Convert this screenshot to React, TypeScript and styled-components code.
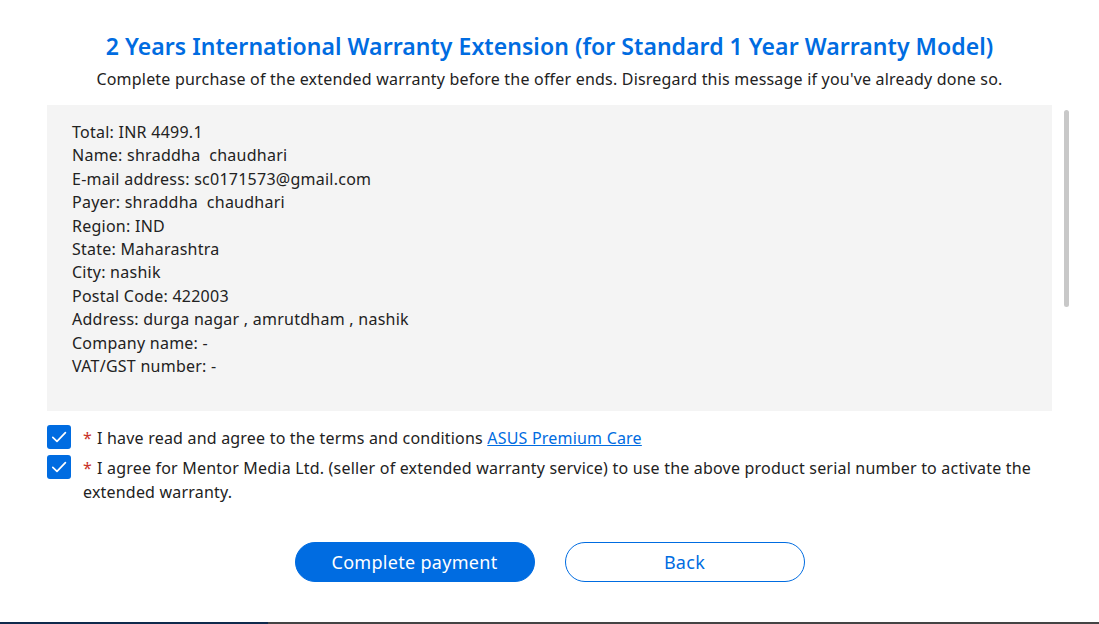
import React from "react";
import styled, { createGlobalStyle } from "styled-components";

const Global = createGlobalStyle`
  html, body { margin: 0; padding: 0; background: #fff; }
  body { font-family: "Noto Sans", "Open Sans", sans-serif; color: #222; }
  * { box-sizing: border-box; }
`;

const Page = styled.div`
  width: 1099px;
  height: 624px;
  display: flex;
  flex-direction: column;
  overflow: hidden;
`;

const Main = styled.div`
  flex: 1;
  display: flex;
  flex-direction: column;
  padding: 29px 0 0 47px;
`;

const Title = styled.h1`
  margin: 0 47px 0 0;
  text-align: center;
  font-size: 23px;
  line-height: 34px;
  font-weight: 600;
  letter-spacing: 0.05px;
  color: #006ce1;
`;

const Subtitle = styled.p`
  margin: 5px 47px 0 0;
  text-align: center;
  font-size: 16px;
  line-height: 22px;
  letter-spacing: 0.2px;
  color: #222;
`;

const BoxRow = styled.div`
  display: flex;
  gap: 12px;
  margin-top: 15px;
`;

const InfoBox = styled.div`
  width: 1005px;
  height: 306px;
  background: #f4f4f4;
  padding: 16px 25px;
  font-size: 16px;
  line-height: 23.4px;
  letter-spacing: 0.25px;
  color: #222;
`;

const Track = styled.div`
  width: 5px;
  padding-top: 5px;
`;

const Thumb = styled.div`
  width: 5px;
  height: 197px;
  border-radius: 3px;
  background: #c8c8c8;
`;

const Agreements = styled.div`
  display: flex;
  flex-direction: column;
  gap: 5px;
  margin-top: 14px;
  width: 1005px;
`;

const Agree = styled.div`
  display: flex;
  align-items: flex-start;
  gap: 12px;
  font-size: 16px;
  line-height: 24px;
  letter-spacing: 0.2px;
  color: #222;
`;

const Box = styled.span`
  flex: none;
  width: 24px;
  height: 24px;
  border-radius: 3px;
  background: #006ce1;
  display: flex;
  align-items: center;
  justify-content: center;
`;

const AgreeText = styled.p`
  margin: 1px 0 0;
  &::before {
    content: "*";
    color: #c8322a;
    margin-right: 5px;
  }
`;

const Link = styled.a`
  color: #006ce1;
  text-decoration: underline;
`;

const Buttons = styled.div`
  display: flex;
  justify-content: center;
  gap: 30px;
  margin: 38px 47px 0 0;
`;

const Button = styled.button<{ $primary?: boolean }>`
  width: 240px;
  height: 40px;
  border-radius: 20px;
  border: 1px solid #006ce1;
  background: ${(p) => (p.$primary ? "#006ce1" : "#fff")};
  color: ${(p) => (p.$primary ? "#fff" : "#006ce1")};
  font-family: inherit;
  font-size: 18px;
  letter-spacing: 0.3px;
  cursor: pointer;
`;

const Strip = styled.div`
  flex: none;
  height: 2px;
  display: flex;
`;

const StripPart = styled.div<{ $c: string; $w?: string }>`
  background: ${(p) => p.$c};
  width: ${(p) => p.$w || "auto"};
  flex: ${(p) => (p.$w ? "none" : "1")};
`;

const Check = () => (
  <svg width="20" height="20" viewBox="0 0 20 20" fill="none">
    <path d="M3.8 10.4 L8 14.4 L16.4 5.6" stroke="#fff" strokeWidth="1.7" strokeLinecap="round" strokeLinejoin="round" />
  </svg>
);

const lines = [
  "Total: INR 4499.1",
  "Name: shraddha\u00a0 chaudhari",
  "E-mail address: sc0171573@gmail.com",
  "Payer: shraddha\u00a0 chaudhari",
  "Region: IND",
  "State: Maharashtra",
  "City: nashik",
  "Postal Code: 422003",
  "Address: durga nagar , amrutdham , nashik",
  "Company name: -",
  "VAT/GST number: -",
];

export default function App() {
  return (
    <>
      <Global />
      <Page>
        <Main>
          <Title>2 Years International Warranty Extension (for Standard 1 Year Warranty Model)</Title>
          <Subtitle>
            Complete purchase of the extended warranty before the offer ends. Disregard this message if you've already done so.
          </Subtitle>
          <BoxRow>
            <InfoBox>
              {lines.map((l) => (
                <div key={l}>{l}</div>
              ))}
            </InfoBox>
            <Track>
              <Thumb />
            </Track>
          </BoxRow>
          <Agreements>
            <Agree>
              <Box><Check /></Box>
              <AgreeText>
                I have read and agree to the terms and conditions <Link href="#">ASUS Premium Care</Link>
              </AgreeText>
            </Agree>
            <Agree>
              <Box><Check /></Box>
              <AgreeText>
                I agree for Mentor Media Ltd. (seller of extended warranty service) to use the above product serial number to activate the extended warranty.
              </AgreeText>
            </Agree>
          </Agreements>
          <Buttons>
            <Button $primary>Complete payment</Button>
            <Button>Back</Button>
          </Buttons>
        </Main>
        <Strip>
          <StripPart $c="#0f2a4c" $w="268px" />
          <StripPart $c="#444" />
        </Strip>
      </Page>
    </>
  );
}
